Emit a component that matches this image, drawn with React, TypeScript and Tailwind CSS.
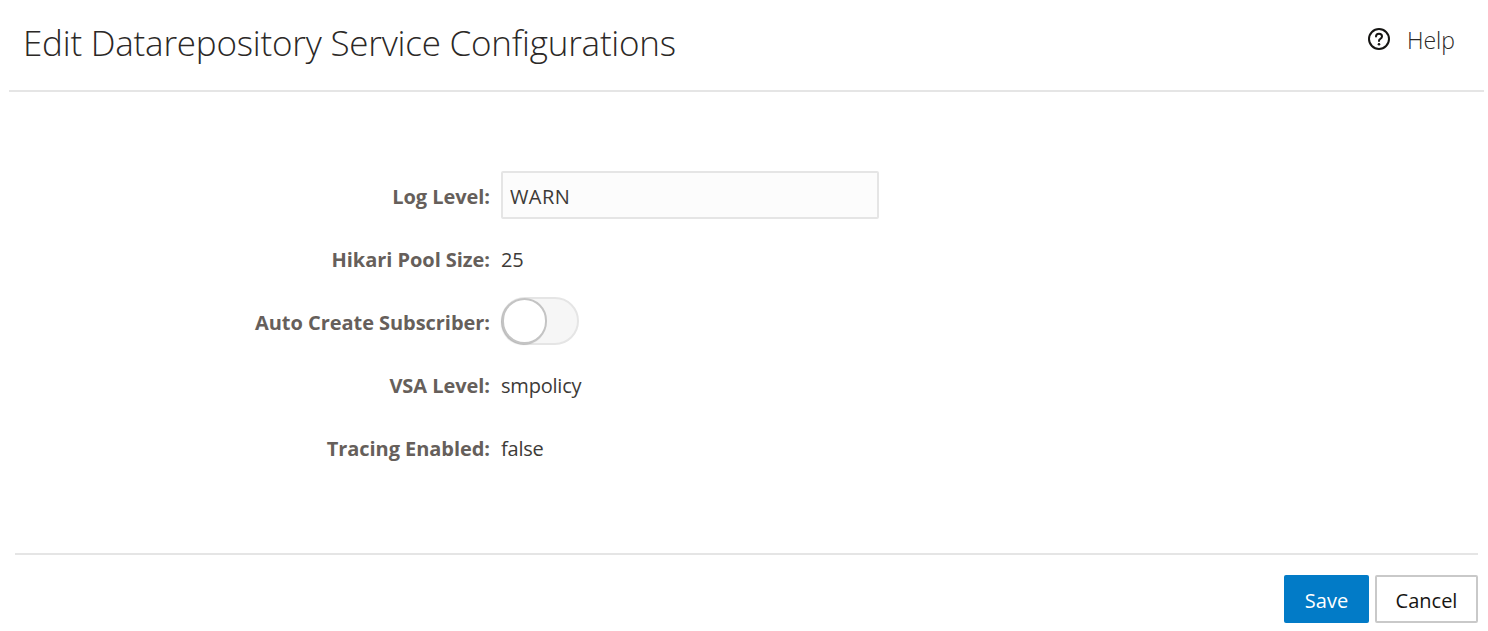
import { useState } from 'react';

const fontStack = 'font-["Open_Sans","Noto_Sans",sans-serif]';

function HelpIcon() {
  return (
    <svg className="w-[24px] h-[24px]" viewBox="0 0 24 24" fill="none">
      <circle cx="12" cy="12" r="10" stroke="#161513" strokeWidth="2" />
      <path d="M9 9.6c0-1.7 1.3-2.8 3-2.8s3 1.1 3 2.6c0 1.3-.8 1.9-1.7 2.5-.8.5-1.3 1-1.3 2" stroke="#161513" strokeWidth="2" strokeLinecap="round" />
      <circle cx="12" cy="17.2" r="1.3" fill="#161513" />
    </svg>
  );
}

function Row({ label, children }: { label: string; children: React.ReactNode }) {
  return (
    <div className="flex items-center h-[63px]">
      <label className="w-[491px] pr-[1px] text-right text-[20px] font-bold text-[#665f5b] tracking-[-0.05px]">
        {label}
      </label>
      <div className="ml-[10px] text-[20px] text-[#3d3a37] tracking-[-0.2px]">{children}</div>
    </div>
  );
}

export default function App() {
  const [level, setLevel] = useState('WARN');
  const [autoCreate, setAutoCreate] = useState(false);

  return (
    <div className={`${fontStack} h-[631px] w-[1488px] bg-white overflow-hidden`}>
      {/* Header */}
      <div className="ml-[9px] mr-[4px] h-[92px] border-b-2 border-[#e5e5e5] flex justify-between">
        <h1 className="ml-[14px] mt-[18px] text-[35px] leading-[50px] font-light text-[#2b2826] tracking-[-0.22px]">
          Edit Datarepository Service Configurations
        </h1>
        <button className="flex items-center h-[24px] mt-[27px] mr-[29px] text-[#2b2826]">
          <HelpIcon />
          <span className="ml-[16px] mt-[2px] text-[23px] font-light">Help</span>
        </button>
      </div>

      {/* Form */}
      <div className="pt-[73px]">
        <Row label="Log Level:">
          <input
            value={level}
            onChange={(e) => setLevel(e.target.value)}
            className="block w-[378px] h-[48px] mb-[4px] pt-[3px] px-[7px] rounded-[2px] border-2 border-[#e5e5e5] bg-[#fcfcfc] outline-none text-[20px] tracking-[0.4px] text-[#3d3a37]"
          />
        </Row>
        <Row label="Hikari Pool Size:">25</Row>
        <Row label="Auto Create Subscriber:">
          <button
            onClick={() => setAutoCreate(!autoCreate)}
            className="relative block w-[78px] h-[48px] mb-[4px] rounded-full border-2 border-[#e5e5e5] bg-[#f6f6f6]"
          >
            <span className="absolute left-[-1px] top-[-1px] w-[45px] h-[46px] rounded-full bg-white border-2 border-[#c4c4c4] shadow-[-1px_1px_1px_rgba(0,0,0,0.2)]" />
          </button>
        </Row>
        <Row label="VSA Level:">smpolicy</Row>
        <Row label="Tracing Enabled:">false</Row>
      </div>

      {/* Footer */}
      <div className="ml-[15px] mr-[10px] mt-[73px] pt-[20px] border-t-2 border-[#e5e5e5] flex justify-end gap-[6px]">
        <button className="w-[85px] h-[48px] pt-[3px] rounded-[2px] bg-[#027bc7] text-white text-[20px]">
          Save
        </button>
        <button className="w-[103px] h-[48px] pt-[3px] rounded-[2px] border-2 border-[#c9c9c9] bg-white text-[#161513] text-[20px]">
          Cancel
        </button>
      </div>
    </div>
  );
}
